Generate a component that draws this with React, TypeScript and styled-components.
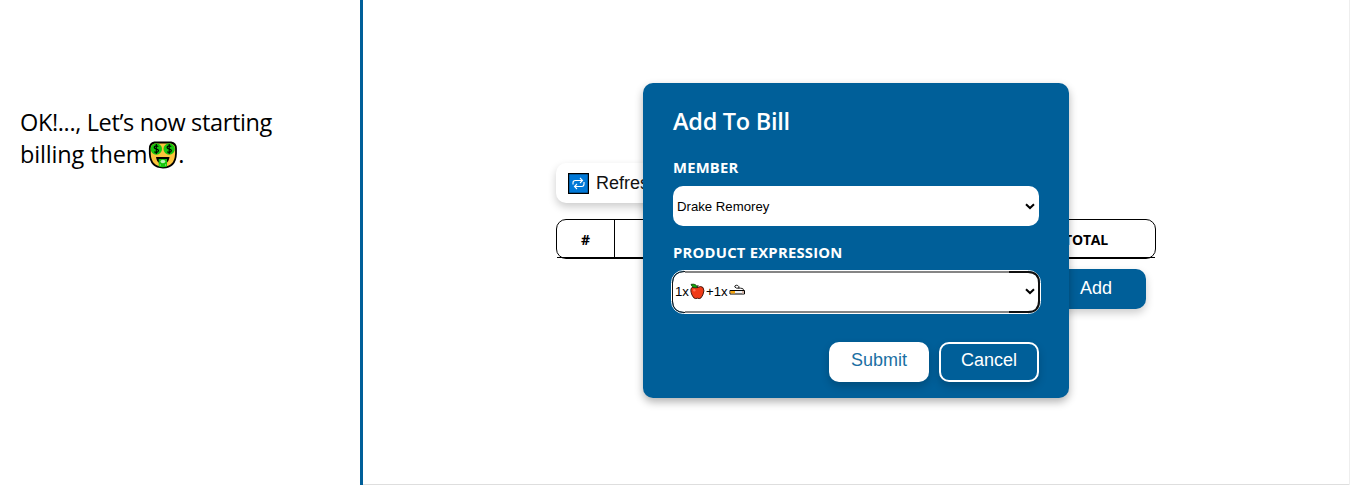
import React from "react";
import styled, { createGlobalStyle } from "styled-components";

const BLUE = "#005f99";
const UI = `"Segoe UI", "Open Sans", "Noto Sans", sans-serif`;
const ARIAL = `"Liberation Sans", Arial, sans-serif`;

const Global = createGlobalStyle`
  * { box-sizing: border-box; }
  body { margin: 0; background: #fff; overflow: hidden; font-family: ${UI}; color: #000; }
`;
const Page = styled.div`
  display: grid;
  grid-template-columns: 363px 986px;
  height: 485px;
`;
const Sidebar = styled.aside`
  border-right: 3px solid ${BLUE};
  padding: 106px 20px 0;
`;
const Message = styled.p`
  margin: 0;
  font-size: 23.5px;
  font-weight: 400;
  line-height: 32px;
  white-space: nowrap;
`;
const Line = styled.span<{ $spacing: number }>`
  display: block;
  height: 32px;
  letter-spacing: ${(p) => p.$spacing}px;
`;
const Face = styled.svg`
  margin-left: 1px;
  vertical-align: -6px;
`;
const Main = styled.main`
  position: relative;
  border-bottom: 1px solid #dedede;
  box-shadow: 1px 0 0 #eee;
  padding: 163px 193px 0;
  display: flex;
  flex-direction: column;
  align-items: flex-start;
`;
const Button = styled.button<{ $kind?: "plain" | "outline" | "blue" }>`
  width: 100px;
  height: 40px;
  padding: 0 0 2px;
  border-radius: 10px;
  border: ${(p) => (p.$kind === "outline" ? "2px solid #fff" : "0")};
  background: ${(p) => (p.$kind === "plain" ? "#fff" : BLUE)};
  color: ${(p) => (p.$kind === "plain" ? "#1a6fa3" : "#fff")};
  font: 18px ${ARIAL};
  box-shadow: 0 4px 8px rgba(0, 0, 0, 0.2);
`;
const Refresh = styled(Button)`
  display: flex;
  align-items: center;
  gap: 7px;
  width: 112px;
  padding: 1px 0 0 12px;
  color: #111;
`;
const Table = styled.div`
  position: relative;
  display: grid;
  grid-template-columns: 58px 1fr 134px;
  width: 600px;
  height: 40px;
  margin-top: 16px;
  border: 1px solid #000;
  border-radius: 10px;
  &::after {
    content: "";
    position: absolute;
    left: 0;
    right: 0;
    bottom: 0;
    height: 1px;
    background: #000;
  }
`;
const Head = styled.div<{ $divided?: boolean }>`
  display: flex;
  align-items: center;
  justify-content: center;
  font-size: 14px;
  font-weight: 700;
  border-right: ${(p) => (p.$divided ? "1px solid #000" : "0")};
`;
const TotalHead = styled(Head)`
  padding-right: 4px;
  letter-spacing: -0.2px;
`;
const AddButton = styled(Button)`
  align-self: flex-end;
  margin: 10px 10px 0 0;
`;
const Modal = styled.section`
  position: absolute;
  left: 280px;
  top: 83px;
  width: 426px;
  height: 315px;
  padding: 22px 30px 0;
  border-radius: 10px;
  background: ${BLUE};
  color: #fff;
  box-shadow: 0 4px 8px rgba(0, 0, 0, 0.3);
`;
const Title = styled.h2`
  margin: 0 0 17px;
  font-size: 23.5px;
  line-height: 32px;
  font-weight: 600;
  letter-spacing: -0.27px;
`;
const Label = styled.label<{ $spacing: number }>`
  display: block;
  height: 20px;
  margin-bottom: 12.4px;
  font-size: 14.8px;
  line-height: 27px;
  font-weight: 700;
  letter-spacing: ${(p) => p.$spacing}px;
`;
const Select = styled.div<{ $focused?: boolean }>`
  display: flex;
  align-items: center;
  height: 40px;
  margin-bottom: 13px;
  padding: 0 4px 0 ${(p) => (p.$focused ? 2 : 4)}px;
  border-radius: 10px;
  background: #fff;
  color: #000;
  font: 13.2px ${ARIAL};
  position: relative;
`;
const FocusRing = styled.svg`
  position: absolute;
  left: -2px;
  top: -2px;
  overflow: visible;
`;
const Chevron = styled.svg`
  margin-left: auto;
`;
const Actions = styled.div`
  display: flex;
  justify-content: flex-end;
  gap: 10px;
  margin-top: 30px;
`;

const MoneyFace = () => (
  <Face width="30" height="28" viewBox="0 0 30 28">
    <path d="M6.500 1.500h16.500q5 1 5 6v5Q27.500 26.500 15 26.500T1.800 12.500V7.500q0-5 4.700-6Z" fill="#fcc33c" stroke="#000" strokeWidth="1.800" />
    <circle cx="8.300" cy="8" r="5.700" fill="#16c60c" />
    <circle cx="21.200" cy="8" r="5.700" fill="#16c60c" />
    <g fill="none" stroke="#000" strokeWidth="1.100">
      <path d="M10.300 5.600Q8.300 4 6.700 5.500T8.300 8t1.700 2.600-3.700.2M8.300 3v10" />
      <path d="M23.200 5.600q-2-1.600-3.600-.1T21.200 8t1.700 2.600-3.700.2M21.200 3v10" />
    </g>
    <path d="M8 16h13.500q-.7 5-3.500 6h-6.500Q8.800 21 8 16Z" fill="#000" />
    <path d="M10.700 18h8.300v7.500q-4 1.500-8.300 0Z" fill="#16c60c" />
    <ellipse cx="14.900" cy="20.500" rx="2.400" ry="1.700" fill="#b8f3b2" />
    <path d="M11.600 24h1.200M17 24h1.200" stroke="#b8f3b2" />
  </Face>
);

const Repeat = () => (
  <svg width="21" height="21" viewBox="0 0 21 21" fill="none">
    <path d="M.5.500h20v20H.5Z" fill="#0078d7" stroke="#000" strokeWidth="1.400" />
    <path d="M5 11.500V9.800Q5 7.500 7.300 7.500H14M12 5l2.500 2.500L12 10M16 9v2q0 2.500-2.300 2.500H7M9 11l-2.500 2.500L9 16" stroke="#fff" strokeWidth="1.100" />
  </svg>
);

const Apple = () => (
  <svg width="17" height="17" viewBox="0 0 17 17">
    <path d="M8.500 4.500Q12 2.500 14 4.500q2 3-.2 7.500-1.800 4-3.600 3.600l-1.700-.4-1.700.4Q4.600 15.800 3 12 .8 7 2.700 4.700 5 3 8.500 4.500Z" fill="#f03a17" stroke="#351008" strokeWidth=".9" />
    <path d="M8.500 4.700Q3 5.500 2 1.300 7.500.300 8.500 4.700Z" fill="#16a10c" stroke="#12330f" strokeWidth=".7" />
    <path d="M8.500 4.700 9 2" stroke="#351008" />
    <circle cx="5.300" cy="7.300" r="1.200" fill="#ff7359" />
  </svg>
);

const Cigarette = () => (
  <svg width="18" height="17" viewBox="0 0 18 17" fill="none">
    <path d="M2 7.500h14.500v3.500H2Z" fill="#f2f2f2" stroke="#000" />
    <path d="M2.500 8h4.500v2.500H2.500Z" fill="#f5a30b" />
    <path d="M14 8h2v2.500h-2Z" fill="#d8b6a8" />
    <path d="M15.500 7q0-2-3-1.800T11 3.800Q10 2 8.200 2.200 6 2.800 7 4.200t4.300 1" stroke="#222" />
  </svg>
);

const Arrow = () => (
  <Chevron width="10" height="7" viewBox="0 0 10 7" fill="none">
    <path d="M1 1.200 5 5 9 1.200" stroke="#000" strokeWidth="2" />
  </Chevron>
);

const Ring = () => (
  <FocusRing width="370" height="44" viewBox="0 0 370 44" fill="none">
    <rect x=".5" y=".5" width="369" height="43" rx="12" stroke="#fff" />
    <path d="M14 2H338M14 42H338" stroke="#858585" strokeWidth="2" />
    <path d="M14 1.500Q1.500 1.500 1.500 13V31Q1.500 42.500 14 42.500" stroke="#101010" />
    <path d="M338 2H357Q368 2 368 13V31Q368 42 357 42H338" stroke="#101010" strokeWidth="2" />
  </FocusRing>
);

export default function App() {
  return (
    <>
      <Global />
      <Page>
        <Sidebar>
          <Message>
            <Line $spacing={-0.36}>OK!..., Let’s now starting</Line>
            <Line $spacing={-0.15}>billing them<MoneyFace />.</Line>
          </Message>
        </Sidebar>
        <Main>
          <Refresh $kind="plain">
            <Repeat />
            Refresh
          </Refresh>
          <Table>
            <Head $divided>#</Head>
            <Head />
            <TotalHead>TOTAL</TotalHead>
          </Table>
          <AddButton>Add</AddButton>
          <Modal>
            <Title>Add To Bill</Title>
            <Label $spacing={0.2}>MEMBER</Label>
            <Select>Drake Remorey<Arrow /></Select>
            <Label $spacing={0.24}>PRODUCT EXPRESSION</Label>
            <Select $focused>
              1x<Apple />+1x<Cigarette />
              <Arrow />
              <Ring />
            </Select>
            <Actions>
              <Button $kind="plain">Submit</Button>
              <Button $kind="outline">Cancel</Button>
            </Actions>
          </Modal>
        </Main>
      </Page>
    </>
  );
}
